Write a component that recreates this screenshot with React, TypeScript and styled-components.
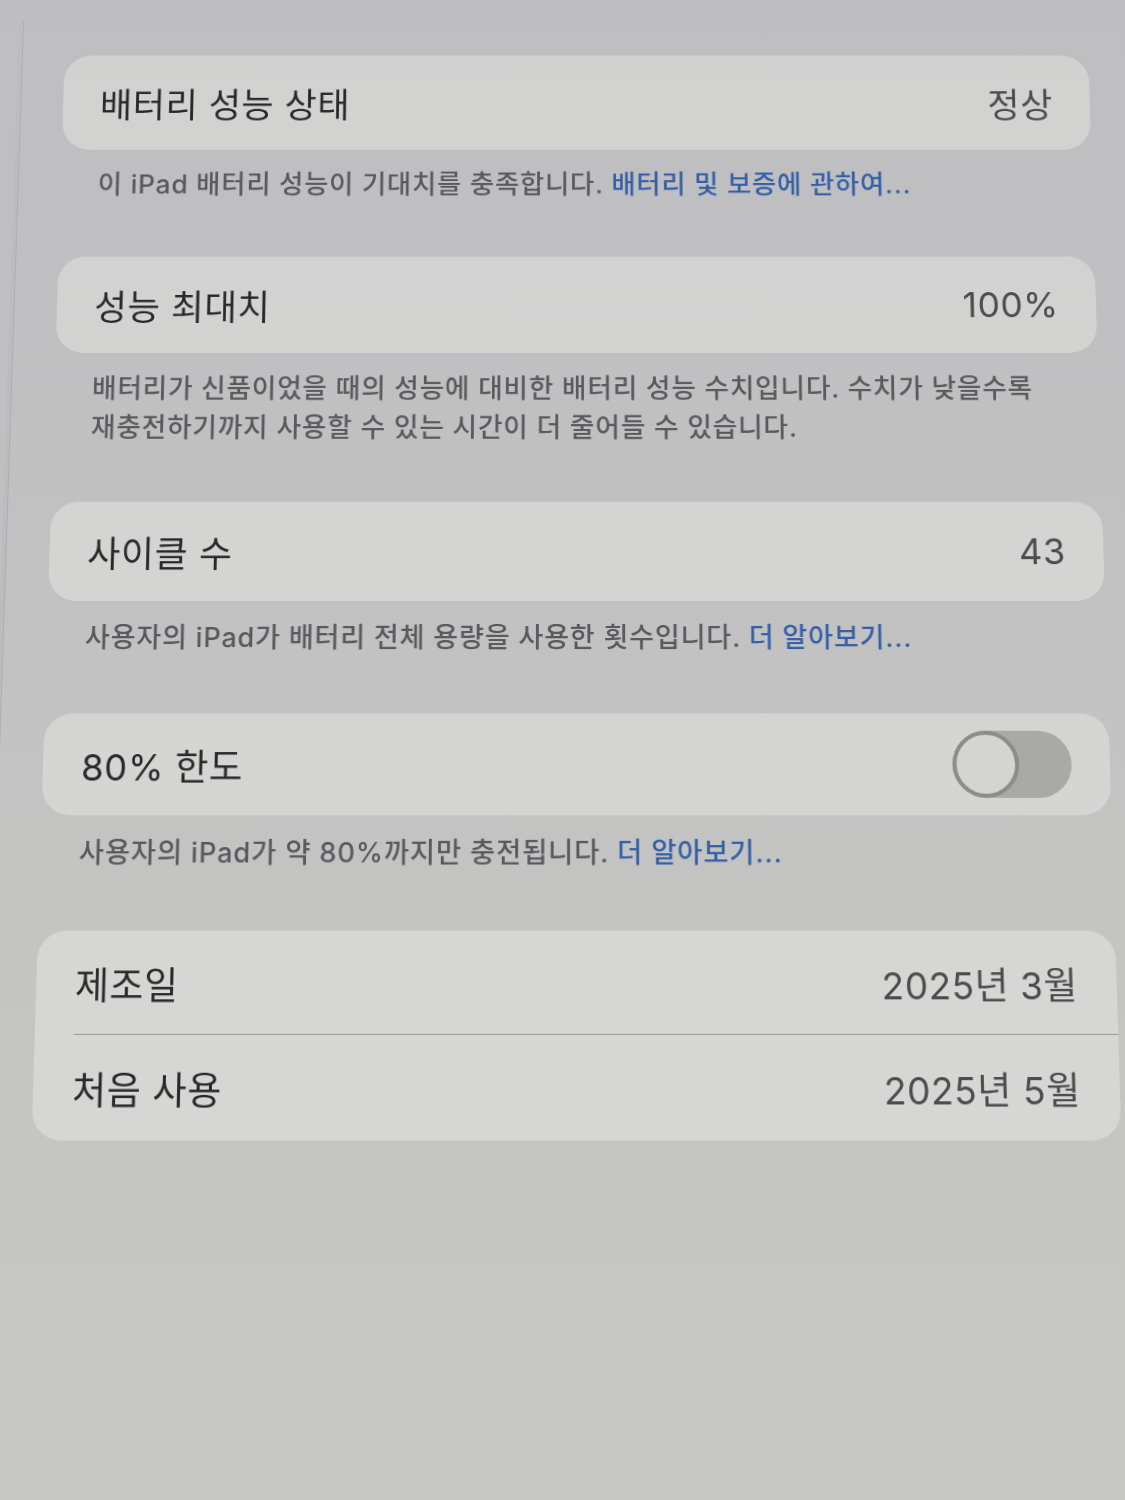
import React from "react";
import styled, { createGlobalStyle } from "styled-components";

const GlobalStyle = createGlobalStyle`
  html, body {
    margin: 0;
    padding: 0;
    background: #c2c1c3;
  }
  body {
    font-family: Inter, "Noto Sans CJK KR", "Noto Sans", sans-serif;
    -webkit-font-smoothing: antialiased;
  }
`;

const Screen = styled.div`
  width: 1125px;
  height: 1500px;
  overflow: hidden;
  background: linear-gradient(180deg, #bebdc0 0%, #c2c2c2 45%, #c8c8c6 100%);
  display: flex;
`;

/* The settings pane, seen slightly tilted away at the top */
const Pane = styled.div`
  flex: 1;
  display: flex;
  transform-origin: 577px 600px;
  transform: perspective(1000px) rotateX(3.3deg);
`;

const Sidebar = styled.div`
  width: 4px;
  border-right: 1px solid #aeaeb0;
  background: #bcbcbe;
`;

const Content = styled.div`
  flex: 1;
  padding: 37px 20px 0 43px;
  display: flex;
  flex-direction: column;
`;

const Group = styled.div`
  background: rgba(255, 255, 248, 0.3);
  border-radius: 28px;
  overflow: hidden;
`;

const Row = styled.div<{ $divider?: boolean }>`
  height: 100px;
  padding: 0 38px;
  display: flex;
  align-items: center;
  justify-content: space-between;
  box-sizing: border-box;
  position: relative;
  ${(p) =>
    p.$divider &&
    `
    &::after {
      content: "";
      position: absolute;
      left: 38px;
      right: 0;
      bottom: 0;
      height: 1.5px;
      background: #9c9c9b;
    }
  `}
`;

const Title = styled.span`
  font-size: 36px;
  font-weight: 400;
  color: #29292b;
  letter-spacing: 0.6px;
`;

const Value = styled.span`
  font-size: 36px;
  font-weight: 400;
  color: #4c4c4e;
  letter-spacing: 0.6px;
`;

const Footer = styled.div`
  padding: 17px 38px 55px;
  font-size: 27px;
  font-weight: 500;
  line-height: 40px;
  color: #5a5a5e;
  letter-spacing: 0.8px;
`;

const Link = styled.span`
  color: #3560a8;
`;

const Switch = styled.div<{ $on?: boolean }>`
  width: 118px;
  height: 66px;
  border-radius: 33px;
  background: ${(p) => (p.$on ? "#34c759" : "#a9a9a6")};
  display: flex;
  justify-content: ${(p) => (p.$on ? "flex-end" : "flex-start")};
`;

const Knob = styled.div`
  width: 66px;
  height: 66px;
  border-radius: 50%;
  box-sizing: border-box;
  background: #d4d4d0;
  border: 4px solid #8c8c8a;
`;

export default function App() {
  return (
    <>
      <GlobalStyle />
      <Screen>
        <Pane>
          <Sidebar />
          <Content>
            <Group>
              <Row>
                <Title>배터리 성능 상태</Title>
                <Value>정상</Value>
              </Row>
            </Group>
            <Footer>
              이 iPad 배터리 성능이 기대치를 충족합니다.{" "}
              <Link>배터리 및 보증에 관하여...</Link>
            </Footer>

            <Group>
              <Row>
                <Title>성능 최대치</Title>
                <Value>100%</Value>
              </Row>
            </Group>
            <Footer>
              배터리가 신품이었을 때의 성능에 대비한 배터리 성능 수치입니다. 수치가 낮을수록
              <br />
              재충전하기까지 사용할 수 있는 시간이 더 줄어들 수 있습니다.
            </Footer>

            <Group>
              <Row>
                <Title>사이클 수</Title>
                <Value>43</Value>
              </Row>
            </Group>
            <Footer>
              사용자의 iPad가 배터리 전체 용량을 사용한 횟수입니다.{" "}
              <Link>더 알아보기...</Link>
            </Footer>

            <Group>
              <Row>
                <Title>80% 한도</Title>
                <Switch>
                  <Knob />
                </Switch>
              </Row>
            </Group>
            <Footer>
              사용자의 iPad가 약 80%까지만 충전됩니다. <Link>더 알아보기...</Link>
            </Footer>

            <Group>
              <Row $divider>
                <Title>제조일</Title>
                <Value>2025년 3월</Value>
              </Row>
              <Row>
                <Title>처음 사용</Title>
                <Value>2025년 5월</Value>
              </Row>
            </Group>
          </Content>
        </Pane>
      </Screen>
    </>
  );
}
